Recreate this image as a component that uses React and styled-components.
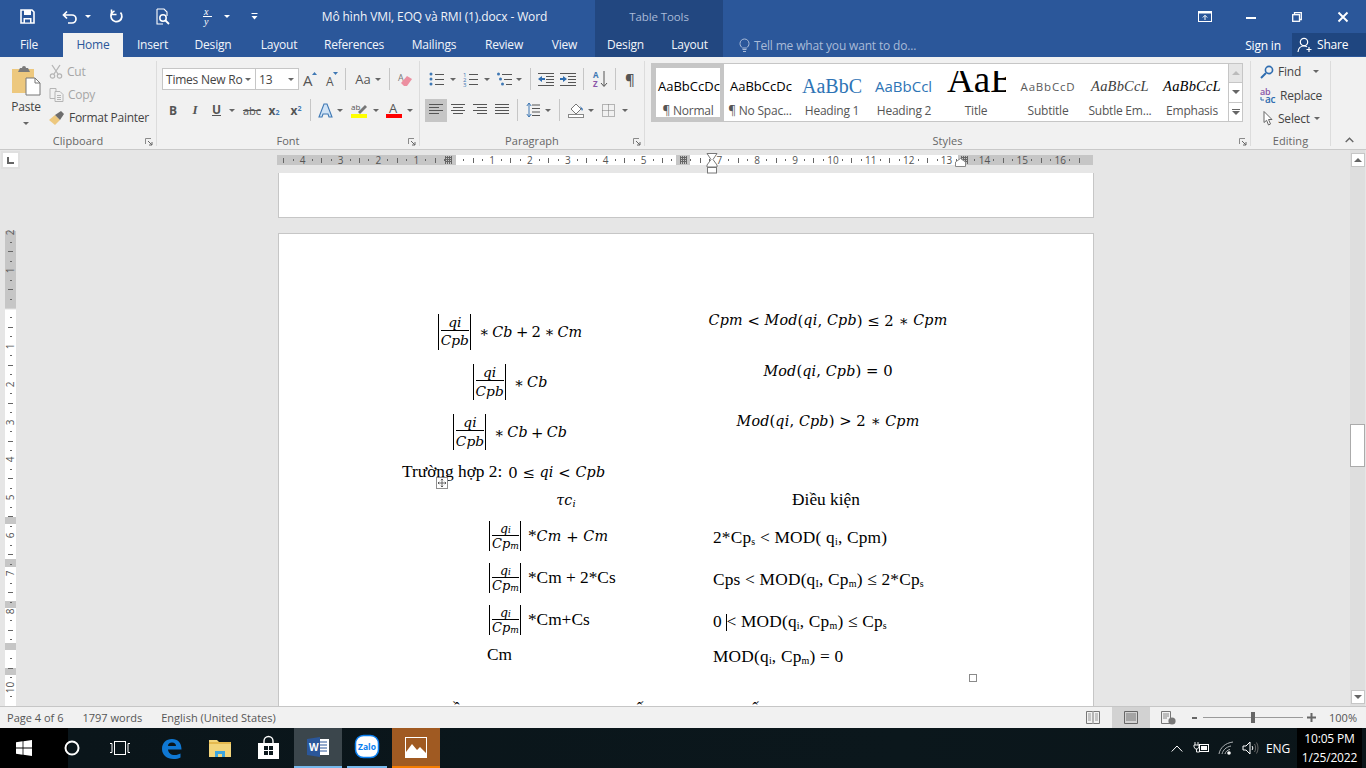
import React from "react";
import styled, { createGlobalStyle } from "styled-components";

const UI = `"Open Sans", "Noto Sans", sans-serif`;
const DOC = `"Liberation Serif", "Times New Roman", serif`;
const MATH = `"DejaVu Serif", "Liberation Serif", serif`;

const GlobalStyle = createGlobalStyle`
  html, body { margin: 0; padding: 0; overflow: hidden; }
  body { font-family: ${UI}; background: #e6e6e6; }
  * { box-sizing: border-box; }
`;

const Shell = styled.div`
  width: 1366px;
  height: 768px;
  display: flex;
  flex-direction: column;
  overflow: hidden;
`;

/* ---------- title bar ---------- */
const TitleBar = styled.div`
  height: 33px;
  background: #2b579a;
  display: flex;
  align-items: center;
  color: #fff;
`;
const Quick = styled.div`
  width: ${(p) => p.$w}px;
  flex: none;
  display: flex;
  align-items: center;
  justify-content: center;
  gap: ${(p) => p.$gap || 5}px;
`;
const DocTitle = styled.div`
  width: 287px;
  margin: 0 17px 0 23px;
  text-align: center;
  font-size: 12px;
  letter-spacing: -0.12px;
  white-space: nowrap;
  color: #f1f4f9;
`;
const ToolsBand = styled.div`
  width: 128px;
  height: 33px;
  background: #224780;
  color: #a9bbd8;
  font-size: 11.5px;
  letter-spacing: -0.1px;
  display: flex;
  align-items: center;
  justify-content: center;
`;
const WindowButtons = styled.div`
  margin-left: auto;
  display: flex;
  align-items: center;
`;
const WinBtn = styled.div`
  width: 46px;
  display: flex;
  justify-content: center;
`;

/* ---------- tabs ---------- */
const TabRow = styled.div`
  height: 24px;
  background: #2b579a;
  display: flex;
  align-items: stretch;
`;
const Tab = styled.div`
  width: ${(p) => p.$w}px;
  flex: none;
  display: flex;
  align-items: center;
  justify-content: center;
  font-size: 12px;
  letter-spacing: -0.2px;
  padding-bottom: 1px;
  color: ${(p) => (p.$active ? "#2b579a" : "#f2f5fa")};
  background: ${(p) => (p.$active ? "#f1f1f1" : p.$context ? "#224780" : "transparent")};
`;
const TellMe = styled.div`
  display: flex;
  align-items: center;
  gap: 4px;
  margin-left: 16px;
  color: #a9bbd8;
  font-size: 12px;
  letter-spacing: -0.17px;
`;
const SignIn = styled.div`
  margin-left: auto;
  width: 72px;
  display: flex;
  align-items: center;
  justify-content: center;
  color: #fff;
  font-size: 12px;
  letter-spacing: -0.2px;
  padding-left: 14px;
`;
const Share = styled.div`
  width: 74px;
  height: 23px;
  background: #1f4680;
  color: #fff;
  font-size: 12px;
  letter-spacing: -0.2px;
  display: flex;
  align-items: center;
  gap: 4px;
  padding-left: 5px;
`;

/* ---------- ribbon ---------- */
const Ribbon = styled.div`
  height: 93px;
  background: #f1f1f1;
  border-bottom: 1px solid #c9c9c9;
  display: flex;
`;
const Group = styled.div`
  width: ${(p) => p.$w}px;
  flex: none;
  position: relative;
  display: flex;
  flex-direction: column;
  margin: 4px 0 3px;
  border-right: 1px solid #dcdcdc;
`;
const GroupBody = styled.div`
  flex: 1;
  min-height: 0;
  display: flex;
  flex-direction: ${(p) => (p.$row ? "row" : "column")};
`;
const GroupLabel = styled.div`
  height: 10px;
  line-height: 10px;
  flex: none;
  text-align: center;
  font-size: 11px;
  letter-spacing: 0.05px;
  color: #666;
`;
const Launcher = styled.svg`
  position: absolute;
  right: 3px;
  bottom: 0;
`;
const PasteCol = styled.div`
  width: 46px;
  display: flex;
  flex-direction: column;
  align-items: center;
  padding: 4px 0 0 6px;
  color: #444;
  font-size: 12px;
  letter-spacing: -0.2px;
  gap: 3px;
`;
const PasteCaret = styled.div`
  margin-top: 3px;
  line-height: 0;
`;
const ClipCol = styled.div`
  display: flex;
  flex-direction: column;
  margin: -1px 0 0 3px;
`;
const ClipItem = styled.div`
  height: 23px;
  display: flex;
  align-items: center;
  gap: 4px;
  font-size: 12px;
  letter-spacing: -0.27px;
  white-space: nowrap;
  color: ${(p) => (p.$off ? "#a6a6a6" : "#444")};
`;
const ToolRow = styled.div`
  display: flex;
  align-items: center;
  height: 24px;
  flex: none;
  margin-top: ${(p) => p.$mt || 0}px;
  margin-left: ${(p) => p.$ml || 0}px;
`;
const Tool = styled.div`
  width: ${(p) => p.$w || 22}px;
  height: 23px;
  flex: none;
  display: flex;
  align-items: center;
  justify-content: center;
  gap: ${(p) => p.$gap || 4}px;
  background: ${(p) => (p.$on ? "#c6c6c6" : "transparent")};
  color: #555;
  font-family: ${(p) => p.$font || "inherit"};
  font-size: ${(p) => p.$fs || 12}px;
  font-weight: ${(p) => p.$fw || 400};
  font-style: ${(p) => (p.$italic ? "italic" : "normal")};
  text-decoration: ${(p) => (p.$strike ? "line-through" : "none")};
`;
const ScriptNum = styled.span`
  font-size: 7px;
  color: #3f78b4;
  align-self: ${(p) => (p.$up ? "flex-start" : "flex-end")};
  margin: ${(p) => (p.$up ? "5px 0 0 -3px" : "0 0 5px -3px")};
`;
const Sep = styled.div`
  width: 1px;
  height: 22px;
  flex: none;
  background: #c6c6c6;
  margin: 0 ${(p) => p.$m ?? 6}px;
`;
const Caret = styled.span`
  display: inline-block;
  width: 0;
  height: 0;
  flex: none;
  border: 3px solid transparent;
  border-top: 3px solid ${(p) => (p.$light ? "#fff" : "#666")};
  border-bottom: 0;
  margin-left: ${(p) => p.$ml || 0}px;
`;
const Combo = styled.div`
  width: ${(p) => p.$w}px;
  height: 22px;
  flex: none;
  background: #fff;
  border: 1px solid #c6c6c6;
  margin-left: ${(p) => (p.$join ? "-1px" : "0")};
  display: flex;
  align-items: center;
  justify-content: space-between;
  padding: 0 4px 0 3px;
  font-size: 12px;
  letter-spacing: -0.22px;
  color: #444;
  white-space: nowrap;
`;
const Gallery = styled.div`
  width: 592px;
  height: 59px;
  margin: 2px 0 0 6px;
  background: #fff;
  border: 1px solid #c6c6c6;
  display: flex;
`;
const StyleCard = styled.div`
  width: 72px;
  flex: none;
  height: 57px;
  display: flex;
  flex-direction: column;
  align-items: center;
  border: 4px solid ${(p) => (p.$on ? "#c6c6c6" : "transparent")};
`;
const Sample = styled.div`
  height: 30px;
  width: ${(p) => p.$width || 64}px;
  flex: none;
  margin-top: 3px;
  overflow: hidden;
  display: flex;
  align-items: center;
  justify-content: ${(p) => (p.$left !== undefined ? "flex-start" : "center")};
  white-space: nowrap;
  font-family: ${(p) => p.$font || UI};
  font-size: ${(p) => p.$size || 13}px;
  font-style: ${(p) => (p.$italic ? "italic" : "normal")};
  color: ${(p) => p.$color || "#000"};
  letter-spacing: ${(p) => p.$ls || 0}px;
  padding-left: ${(p) => p.$left || 0}px;
  padding-bottom: ${(p) => p.$raise || 0}px;
`;
const StyleName = styled.div`
  margin-top: 1px;
  font-size: 12px;
  letter-spacing: -0.22px;
  color: #555;
  white-space: nowrap;
`;
const GalleryScroll = styled.div`
  margin-left: auto;
  width: 15px;
  display: flex;
  flex-direction: column;
`;
const GalleryBtn = styled.div`
  flex: 1;
  display: flex;
  flex-direction: column;
  gap: 1px;
  align-items: center;
  justify-content: center;
  background: ${(p) => (p.$off ? "#e6e6e6" : "#fff")};
  border-left: 1px solid #c6c6c6;
  border-top: ${(p) => (p.$first ? "none" : "1px solid #c6c6c6")};
`;
const EditCol = styled.div`
  display: flex;
  flex-direction: column;
  padding: 0 0 0 9px;
  margin-top: -1px;
`;
const EditItem = styled.div`
  height: 23.5px;
  display: flex;
  align-items: center;
  gap: 4px;
  padding-left: ${(p) => p.$indent || 0}px;
  font-size: 12px;
  letter-spacing: -0.22px;
  color: #444;
`;
const Collapse = styled.div`
  flex: 1;
  display: flex;
  align-items: flex-end;
  justify-content: center;
  padding-bottom: 6px;
  padding-left: 2px;
`;
const UnderBar = styled.span`
  display: inline-block;
  border-bottom: 1.5px solid #555;
  line-height: 11px;
  font-weight: 700;
`;

/* ---------- workspace ---------- */
const Workspace = styled.div`
  flex: 1;
  min-height: 0;
  background: #e6e6e6;
  display: grid;
  grid-template-columns: 278px 816px 256px 16px;
  grid-template-rows: 23px 1fr;
`;
const Corner = styled.div`
  padding: 3px 0 0 3px;
`;
const CornerBtn = styled.div`
  width: 15px;
  height: 14px;
  background: #fff;
  outline: 2px solid #e0e0e0;
  display: flex;
  align-items: center;
  justify-content: center;
`;
const HRuler = styled.div`
  height: 10px;
  margin: 5px 0 0 -1px;
  width: 816px;
  display: flex;
  padding-left: 2px;
  position: relative;
  background: linear-gradient(
    to right,
    #c6c6c6 179px,
    #fff 179px,
    #fff 399px,
    #c6c6c6 399px,
    #c6c6c6 413px,
    #fff 413px,
    #fff 681px,
    #c6c6c6 681px
  );
`;
const HCell = styled.div`
  flex: 0 0 9.475px;
  width: 9.475px;
  min-width: 0;
  display: flex;
  align-items: center;
  justify-content: center;
  font-size: 10px;
  line-height: 10px;
  color: #555;
  white-space: nowrap;
`;
const HTick = styled.span`
  width: 1px;
  flex: none;
  height: ${(p) => (p.$long ? 5 : 2)}px;
  background: #666;
`;
const RulerGrid = styled.svg`
  position: absolute;
  top: 1px;
  left: ${(p) => p.$x}px;
`;
const Marker = styled.svg`
  position: absolute;
  left: ${(p) => p.$x}px;
  top: ${(p) => p.$y}px;
`;
const VRulerCol = styled.div`
  padding: 55px 0 0 5px;
  grid-row: 2;
  overflow: hidden;
`;
const VRuler = styled.div`
  width: 11px;
  height: 478px;
  display: flex;
  flex-direction: column;
  overflow: hidden;
  background: linear-gradient(
    to bottom,
    transparent 3px,
    #c6c6c6 3px,
    #c6c6c6 80px,
    #fff 82px,
    #fff 289px,
    #c6c6c6 289px,
    #c6c6c6 296px,
    #fff 296px,
    #fff 331px,
    #c6c6c6 331px,
    #c6c6c6 339px,
    #fff 339px,
    #fff 373px,
    #c6c6c6 373px,
    #c6c6c6 380px,
    #fff 380px,
    #fff 415px,
    #c6c6c6 415px,
    #c6c6c6 422px,
    #fff 422px,
    #fff 440px,
    #c6c6c6 440px,
    #c6c6c6 447px,
    #fff 447px
  );
`;
const VCell = styled.div`
  flex: 0 0 9.475px;
  height: 9.475px;
  min-height: 0;
  display: flex;
  align-items: center;
  justify-content: center;
  font-size: 10px;
  line-height: 9px;
  color: #555;
  white-space: nowrap;
`;
const VNum = styled.span`
  transform: rotate(-90deg);
`;
const VTick = styled.span`
  height: 1px;
  flex: none;
  width: ${(p) => (p.$long ? 5 : 2)}px;
  background: #666;
`;
const Pages = styled.div`
  grid-row: 2;
  grid-column: 2;
  display: flex;
  flex-direction: column;
  gap: 15px;
  overflow: hidden;
  min-height: 0;
`;
const PageTail = styled.div`
  height: 45px;
  flex: none;
  background: #fff;
  border: 1px solid #c6c6c6;
  border-top: none;
`;
const Page = styled.div`
  flex: 1;
  min-height: 0;
  position: relative;
  background: #fff;
  border: 1px solid #c6c6c6;
  border-bottom: none;
  padding: 72px 0 0 123px;
  font-family: ${DOC};
  font-size: 17.33px;
  color: #000;
  overflow: hidden;
`;
const CaseGrid = styled.div`
  display: grid;
  grid-template-columns: 216px 420px;
  grid-auto-rows: 50.4px;
  align-items: center;
  justify-items: center;
`;
const CondCell = styled.div`
  padding-bottom: 22px;
  white-space: nowrap;
`;
const MathLine = styled.div`
  display: flex;
  align-items: center;
  white-space: nowrap;
  font-family: ${MATH};
  font-size: 14.8px;
`;
const CostExpr = styled(MathLine)`
  word-spacing: -1.5px;
  padding-top: 1px;
`;
const PlainPart = styled.span`
  font-family: ${DOC};
  font-size: 17.33px;
`;
const Mi = styled.i`
  font-family: ${MATH};
  font-size: ${(p) => p.$fs || 14.3}px;
  letter-spacing: 0.2px;
`;
const Abs = styled.div`
  display: flex;
  align-items: center;
  padding: 0 1px 0 2px;
  margin: 0 ${(p) => p.$mr || 4}px 0 ${(p) => p.$ml || 0}px;
  border-left: 1px solid #000;
  border-right: 1px solid #000;
  height: ${(p) => p.$h}px;
`;
const Frac = styled.div`
  display: flex;
  flex-direction: column;
  align-items: center;
`;
const Num = styled.div`
  height: ${(p) => p.$h}px;
  display: flex;
  align-items: center;
  justify-content: center;
  align-self: stretch;
  font-family: ${MATH};
  font-style: italic;
  font-size: ${(p) => p.$fs}px;
  border-bottom: 1px solid #000;
`;
const Den = styled.div`
  height: ${(p) => p.$h}px;
  display: flex;
  align-items: center;
  font-family: ${MATH};
  font-style: italic;
  font-size: ${(p) => p.$fs}px;
`;
const Sub = styled.sub`
  font-size: 0.7em;
  line-height: 0;
  align-self: center;
  margin-top: 4px;
`;
const CaseLine = styled.div`
  height: 20px;
  margin-top: 5px;
  display: flex;
  align-items: center;
  gap: 6px;
  white-space: nowrap;
`;
const CostTable = styled.div`
  margin: 6px 0 0 85px;
  display: grid;
  grid-template-columns: 226px 400px;
  grid-template-rows: 27px 42px 42px 42px 28px;
  align-items: center;
  position: relative;
  white-space: nowrap;
`;
const HeadLeft = styled.div`
  width: 158px;
  text-align: center;
`;
const HeadRight = styled.div`
  width: 226px;
  text-align: center;
`;
const TableRowHead = styled.div`
  grid-column: 1 / 3;
  display: grid;
  grid-template-columns: 226px 400px;
  align-items: center;
  height: 27px;
  padding-bottom: 3px;
`;
const Condition = styled.div`
  letter-spacing: 0.2px;
  padding-top: 3px;
`;
const TextCaret = styled.span`
  display: inline-block;
  width: 1px;
  height: 17px;
  background: #000;
  margin-right: -1px;
  vertical-align: -4px;
`;
const SmallSub = styled.sub`
  font-size: 10px;
  line-height: 0;
  vertical-align: -2px;
`;
const Accents = styled.div`
  position: absolute;
  left: 0;
  bottom: -13px;
  display: flex;
  font-size: 17px;
`;
const AccentMark = styled.span`
  margin-left: ${(p) => p.$ml}px;
`;
const MoveHandle = styled.div`
  position: absolute;
  left: 157px;
  top: 243px;
  width: 12px;
  height: 12px;
  background: #fff;
  border: 1px solid #8f8f8f;
  display: flex;
  align-items: center;
  justify-content: center;
`;
const SizeHandle = styled.div`
  position: absolute;
  left: 690px;
  top: 440px;
  width: 8px;
  height: 8px;
  border: 1px solid #8a8a8a;
  background: #fff;
`;
const ScrollBar = styled.div`
  grid-row: 1 / 3;
  grid-column: 4;
  background: #dedede;
  margin-right: 1px;
  display: flex;
  flex-direction: column;
  align-items: center;
  padding: 3px 0 2px;
`;
const ScrollBtn = styled.div`
  width: 14px;
  height: 14px;
  flex: none;
  background: #fff;
  border: 1px solid #c6c6c6;
  display: flex;
  align-items: center;
  justify-content: center;
  margin-top: ${(p) => (p.$end ? "auto" : 0)};
`;
const Thumb = styled.div`
  width: 15px;
  height: 43px;
  flex: none;
  margin-top: 257px;
  background: #fff;
  border: 1px solid #ababab;
`;

/* ---------- status bar ---------- */
const StatusBar = styled.div`
  height: 22px;
  flex: none;
  background: #f1f1f1;
  border-top: 1px solid #c6c6c6;
  display: flex;
  align-items: center;
  font-size: 11px;
  letter-spacing: 0.01px;
  color: #555;
`;
const StatusItem = styled.div`
  margin-left: ${(p) => p.$ml}px;
  margin-right: ${(p) => p.$mr || 0}px;
  white-space: nowrap;
`;
const StatusSpacer = styled.div`
  flex: 1;
`;
const ViewBtn = styled.div`
  width: ${(p) => p.$w}px;
  height: 21px;
  flex: none;
  margin-right: ${(p) => p.$mr || 0}px;
  display: flex;
  align-items: center;
  justify-content: center;
  background: ${(p) => (p.$on ? "#d2d2d2" : "transparent")};
`;
const ZoomTrack = styled.div`
  width: 100px;
  height: 1px;
  flex: none;
  margin: 0 4px;
  background: #9a9a9a;
  display: flex;
  justify-content: center;
  align-items: center;
`;
const ZoomThumb = styled.div`
  width: 4px;
  height: 11px;
  background: #666;
  flex: none;
`;
const ZoomSign = styled.div`
  width: 9px;
  flex: none;
  display: flex;
  justify-content: center;
`;

/* ---------- taskbar ---------- */
const Taskbar = styled.div`
  height: 40px;
  flex: none;
  background: linear-gradient(to right, #000 68px, #0a151a 68px, #0b171c 900px, #0b1519);
  display: flex;
  align-items: stretch;
  color: #fff;
`;
const TaskSlot = styled.div`
  width: ${(p) => p.$w || 48}px;
  flex: none;
  margin-left: ${(p) => p.$ml || 0}px;
  display: flex;
  align-items: center;
  justify-content: center;
  background: ${(p) => p.$bg || "transparent"};
  border-bottom: ${(p) => (p.$bar ? `2px solid ${p.$bar}` : "none")};
`;
const Tray = styled.div`
  margin-left: auto;
  display: flex;
  align-items: center;
`;
const TrayIcon = styled.div`
  width: ${(p) => p.$w}px;
  flex: none;
  display: flex;
  justify-content: center;
`;
const TrayText = styled.div`
  font-size: 12px;
  width: 38px;
  text-align: center;
  letter-spacing: -0.1px;
`;
const Clock = styled.div`
  width: 65px;
  height: 40px;
  background: #000;
  margin-right: 4px;
  display: flex;
  flex-direction: column;
  align-items: center;
  justify-content: center;
  font-size: 12px;
  line-height: 19px;
  letter-spacing: -0.15px;
  white-space: nowrap;
`;

/* ---------- drawings ---------- */
const IcSvg = styled.svg`
  flex: none;
  display: block;
  overflow: visible;
`;
const Ic = ({ w = 16, h = 16, children }) => (
  <IcSvg width={w} height={h} viewBox={`0 0 ${w} ${h}`} fill="none">
    {children}
  </IcSvg>
);

const Lines = ({ rows, color = "#555" }) => (
  <Ic w={16} h={14}>
    {rows.map(([x1, x2], i) => (
      <rect key={i} x={x1} y={1 + i * 3} width={x2 - x1} height="1" fill={color} />
    ))}
  </Ic>
);

const SaveIcon = () => (
  <Ic w={15} h={15}>
    <path d="M1 1h11l2 2v11H1z" stroke="#fff" strokeWidth="1.6" />
    <rect x="4" y="1" width="7" height="5" fill="#fff" />
    <rect x="3.5" y="9" width="8" height="5" fill="#fff" />
    <rect x="5" y="10.5" width="5" height="3" fill="#2b579a" />
  </Ic>
);
const UndoIcon = () => (
  <Ic w={16} h={14}>
    <path d="M5 1.5 1.5 5 5 8.5M2 5h8a4 4 0 0 1 0 8H6" stroke="#fff" strokeWidth="1.7" />
  </Ic>
);
const RedoIcon = () => (
  <Ic w={15} h={15}>
    <path d="M11.5 3.5a5.5 5.5 0 1 1-6-1.5" stroke="#fff" strokeWidth="1.8" />
    <path d="M2.5 0.5v5h5" stroke="#fff" strokeWidth="1.6" />
  </Ic>
);
const PreviewIcon = () => (
  <Ic w={16} h={17}>
    <path d="M2 1h7l3 3v4M2 1v15h6" stroke="#fff" strokeWidth="1.1" />
    <circle cx="8" cy="10" r="3.2" stroke="#fff" strokeWidth="1.5" />
    <path d="M10.5 12.5 14 16" stroke="#fff" strokeWidth="1.8" />
  </Ic>
);
const EquationIcon = () => (
  <Ic w={9} h={19}>
    <text x="1" y="8" fontFamily={DOC} fontStyle="italic" fontSize="10" fill="#fff">x</text>
    <rect x="0" y="9" width="9" height="1" fill="#fff" />
    <text x="1" y="18" fontFamily={DOC} fontStyle="italic" fontSize="10" fill="#fff">y</text>
  </Ic>
);
const CustomizeIcon = () => (
  <Ic w={7} h={7}>
    <rect x="0.5" y="0" width="6" height="1" fill="#fff" />
    <path d="M0.5 3h6L3.5 6.5z" fill="#fff" />
  </Ic>
);
const RibbonOptions = () => (
  <Ic w={14} h={11}>
    <rect x="0.5" y="0.5" width="13" height="10" stroke="#fff" />
    <rect x="0.5" y="0.5" width="13" height="2" fill="#fff" />
    <path d="M7 9V4.5M4.8 6.5 7 4.3l2.2 2.2" stroke="#fff" />
  </Ic>
);
const MinIcon = () => (
  <Ic w={10} h={10}>
    <rect x="0" y="5" width="10" height="2" fill="#fff" />
  </Ic>
);
const RestoreIcon = () => (
  <Ic w={10} h={10}>
    <path d="M2.5 2.5V.7h6.8v6.8H7.5" stroke="#fff" strokeWidth="1.3" />
    <rect x=".7" y="2.7" width="6.8" height="6.6" stroke="#fff" strokeWidth="1.3" />
  </Ic>
);
const CloseIcon = () => (
  <Ic w={10} h={10}>
    <path d="M.5.5l9 9M9.5.5l-9 9" stroke="#fff" strokeWidth="1.9" />
  </Ic>
);
const BulbIcon = () => (
  <Ic w={11} h={15}>
    <path d="M3.5 10C2 8.7 1 7.6 1 5.5a4.500 4.500 0 0 1 9 0C10 7.6 9 8.7 7.5 10z" stroke="#a9bbd8" />
    <path d="M3.5 11.5h4M4 13.5h3" stroke="#a9bbd8" />
  </Ic>
);
const ShareIcon = () => (
  <Ic w={16} h={16}>
    <circle cx="7" cy="5" r="3.7" stroke="#fff" strokeWidth="1.2" />
    <path d="M1 15c.3-3.4 2.5-6 6-6 1.2 0 2.2.3 3 .8" stroke="#fff" strokeWidth="1.2" />
    <path d="M12 10v5M9.5 12.5h5" stroke="#fff" strokeWidth="1.2" />
  </Ic>
);
const PasteIcon = () => (
  <Ic w={30} h={30}>
    <rect x="1" y="4" width="22" height="24" fill="#edc87e" />
    <path d="M9 3h2a2 2 0 0 1 4 0h2l2 4H7z" fill="#7a7a7a" />
    <path d="M15 13h9l5 5v12H15z" fill="#fff" stroke="#777" />
    <path d="M24 13v5h5" stroke="#777" />
  </Ic>
);
const CutIcon = () => (
  <Ic w={14} h={15}>
    <path d="M3 1l6 9M11 1L5 10" stroke="#b5b5b5" strokeWidth="1.3" />
    <circle cx="3.5" cy="12" r="2.2" stroke="#b5b5b5" strokeWidth="1.2" />
    <circle cx="10.5" cy="12" r="2.2" stroke="#b5b5b5" strokeWidth="1.2" />
  </Ic>
);
const CopyIcon = () => (
  <Ic w={15} h={14}>
    <path d="M1 .5h6v10H1z" stroke="#b5b5b5" />
    <path d="M6 3.5h5l3 3v7H6z" fill="#f1f1f1" stroke="#b5b5b5" />
    <path d="M8 7.5h4M8 9.5h4M8 11.5h4" stroke="#b5b5b5" />
  </Ic>
);
const PainterIcon = () => (
  <Ic w={16} h={15}>
    <path d="M0 10l6-5 5 5-5 5z" fill="#edc87e" />
    <path d="M6 5l6-4 3 3-4 6z" fill="#6d6d6d" />
  </Ic>
);
const Launch = () => (
  <Launcher width="8" height="8" viewBox="0 0 8 8" fill="none">
    <path d="M.5 6V.5H6" stroke="#8a8a8a" />
    <path d="M3 3l4 4M7 4v3H4" stroke="#666" />
  </Launcher>
);
const BigA = ({ up }) => (
  <Ic w={up ? 14 : 12} h={15}>
    <text x="0" y="14" fontFamily={UI} fontSize={up ? 15 : 12} fill="#555">A</text>
    <path d={up ? "M9 3l2.5-3L14 3z" : "M7 0h5L9.5 3z"} fill="#3f78b4" />
  </Ic>
);
const Eraser = () => (
  <Ic w={15} h={15}>
    <text x="0" y="9" fontFamily={UI} fontSize="9" fill="#777">A</text>
    <path d="M3 11l6-7 5 3-5 7H6z" fill="#ec8fa0" />
  </Ic>
);
const TextEffect = () => (
  <Ic w={15} h={15}>
    <path d="M1 14L6 1h3l5 13h-3l-1-3H5l-1 3z" fill="#cfe2f5" stroke="#3f78b4" strokeWidth="1.1" />
  </Ic>
);
const Highlight = () => (
  <Ic w={16} h={16}>
    <text x="0" y="8" fontFamily={UI} fontSize="8" fill="#555">ab</text>
    <path d="M7 10l7-7 2 2-7 7z" fill="#777" />
    <rect x="0" y="12" width="16" height="4" fill="#ffff00" />
  </Ic>
);
const FontColor = () => (
  <Ic w={16} h={16}>
    <text x="3" y="11" fontFamily={UI} fontSize="13" fill="#555">A</text>
    <rect x="0" y="12" width="16" height="4" fill="#f00" />
  </Ic>
);
const ListIcon = ({ kind }) => (
  <Ic w={15} h={15}>
    {[2, 7, 12].map((y, i) => (
      <g key={y}>
        {kind === "num" ? (
          <text x="0" y={y + 3} fontSize="6" fontFamily={UI} fill="#3f78b4">{i + 1}</text>
        ) : (
          <circle cx={kind === "multi" ? 1.5 + i * 2 : 2} cy={y} r="1.5" fill="#3f78b4" />
        )}
        <rect x={kind === "multi" ? 5 + i * 2 : 6} y={y} width={kind === "multi" ? 10 - i * 2 : 9} height="1" fill="#555" />
      </g>
    ))}
  </Ic>
);
const IndentIcon = ({ dir }) => (
  <Ic w={16} h={13}>
    {[0, 3, 6, 9, 12].map((y) => (
      <rect key={y} x={y === 0 || y === 12 ? 0 : 8} y={y} width={y === 0 || y === 12 ? 16 : 8} height="1" fill="#555" />
    ))}
    <path d={dir === "out" ? "M0 6l4-3v2h3v2H4v2z" : "M7 6L3 3v2H0v2h3v2z"} fill="#2f6db0" />
  </Ic>
);
const SortIcon = () => (
  <Ic w={15} h={17}>
    <text x="0" y="7" fontSize="8" fontFamily={UI} fontWeight="700" fill="#3f78b4">A</text>
    <text x="0" y="16" fontSize="8" fontFamily={UI} fontWeight="700" fill="#8a55a8">Z</text>
    <path d="M11 0v15M8 12l3 3.5 3-3.5" stroke="#555" />
  </Ic>
);
const LineSpacing = () => (
  <Ic w={14} h={16}>
    <path d="M3 1v14M.8 4 3 1l2.2 3M.8 12 3 15l2.2-3" stroke="#3f78b4" />
    <path d="M6 3h8M6 6.5h8M6 10h8M6 13.5h8" stroke="#555" />
  </Ic>
);
const Shading = () => (
  <Ic w={16} h={16}>
    <path d="M3 7l5-5 5 5-5 5z" stroke="#777" fill="#fff" />
    <path d="M12 4l3 3-1 2z" fill="#2f6db0" />
    <rect x=".5" y="12.5" width="15" height="3" stroke="#888" fill="#fff" />
  </Ic>
);
const Borders = () => (
  <Ic w={13} h={13}>
    <path d="M.5.5h12v12H.5zM6.5.5v12M.5 6.5h12" stroke="#777" strokeDasharray="1 1" />
  </Ic>
);
const FindIcon = () => (
  <Ic w={14} h={14}>
    <circle cx="9" cy="5" r="3.6" stroke="#2f6db0" strokeWidth="1.6" />
    <path d="M6 8l-5 5" stroke="#2f6db0" strokeWidth="2" />
  </Ic>
);
const ReplaceIcon = () => (
  <Ic w={16} h={15}>
    <text x="0" y="7" fontSize="9" fontFamily={UI} fontWeight="600" fill="#8a55a8">ab</text>
    <text x="5" y="15" fontSize="10" fontFamily={UI} fontWeight="600" fill="#2f6db0">ac</text>
    <path d="M1 9v3h3" stroke="#2f6db0" />
  </Ic>
);
const SelectIcon = () => (
  <Ic w={11} h={15}>
    <path d="M1 .5v11l2.6-2.2L5.500 14l2-1-2-4.500H9z" stroke="#666" fill="#fff" />
  </Ic>
);
const ChevronUp = () => (
  <Ic w={9} h={6}>
    <path d="M.7 5 4.500 1.200 8.300 5" stroke="#666" strokeWidth="1.4" />
  </Ic>
);
const Tri = ({ up, c = "#666" }) => (
  <Ic w={8} h={4}>
    <path d={up ? "M0 4l4-4 4 4z" : "M0 0l4 4 4-4z"} fill={c} />
  </Ic>
);
const MoreTri = () => (
  <>
    <Ic w={8} h={1}><rect width="8" height="1" fill="#666" /></Ic>
    <Tri />
  </>
);
const ReadIcon = () => (
  <Ic w={14} h={13}>
    <path d="M.5.5h6l.5 1 .5-1h6v12h-6L7 11.500l-.5 1h-6zM7 2v9" stroke="#777" />
    <path d="M2 3h3M2 5h3M2 7h3M2 9h3M9 3h3M9 5h3M9 7h3M9 9h3" stroke="#999" />
  </Ic>
);
const PrintIcon = () => (
  <Ic w={14} h={13}>
    <path d="M.5.5h13v12H.5z" stroke="#666" />
    <path d="M2 3h10M2 5h10M2 7h10M2 9h10" stroke="#777" />
  </Ic>
);
const WebIcon = () => (
  <Ic w={15} h={14}>
    <path d="M.5.5h9v12h-9z" stroke="#777" />
    <path d="M2 3h6M2 5h6M2 7h4" stroke="#888" />
    <circle cx="11" cy="10" r="3.6" fill="#777" />
  </Ic>
);
const GridMark = ({ x }) => (
  <RulerGrid $x={x} width="7" height="8" viewBox="0 0 7 8" fill="none">
    <path d="M.5 0v8M2.500 0v8M4.500 0v8M6.500 0v8M0 1.500h7M0 3.500h7M0 5.500h7" stroke="#666" />
  </RulerGrid>
);
const WinLogo = () => (
  <Ic w={16} h={16}>
    <path d="M0 2.200 6.600 1.300v6.200H0zM7.400 1.200 16 0v7.500H7.400zM0 8.400h6.600v6.300L0 13.800zM7.400 8.400H16V16l-8.600-1.200z" fill="#fff" />
  </Ic>
);
const CortanaIcon = () => (
  <Ic w={16} h={16}>
    <circle cx="8" cy="8" r="6.500" stroke="#fff" strokeWidth="2" />
  </Ic>
);
const TaskViewIcon = () => (
  <Ic w={20} h={14}>
    <rect x="4.500" y=".5" width="11" height="13" stroke="#fff" />
    <path d="M0 2.500h2v9H0M20 2.500h-2v9h2" stroke="#fff" />
  </Ic>
);
const EdgeIcon = () => (
  <Ic w={21} h={21}>
    <path d="M1 11C1 5 5 1 11 1c6 0 9.500 4 9.500 10.500H7c.3 3.500 3 5.500 6.500 5.500 2.500 0 4.500-.6 6-1.500v4c-2 1-4.300 1.500-7 1.500C6 21 1 17 1 11zm6-3h8c0-2-1.500-3.500-4-3.500S7 6 7 8z" fill="#0f78d4" />
  </Ic>
);
const FolderIcon = () => (
  <Ic w={22} h={19}>
    <path d="M0 1h8l2 2h12v15H0z" fill="#f3d57b" />
    <rect x="0" y="3" width="22" height="2" fill="#e5b94e" />
    <path d="M6 12h10v6H13v-3H9v3H6z" fill="#3ea6e0" />
  </Ic>
);
const StoreIcon = () => (
  <Ic w={21} h={22}>
    <path d="M0 6h21v16H0z" fill="#fff" />
    <path d="M6 6V4a4 4 0 0 1 9 0v2" stroke="#fff" strokeWidth="1.4" />
    <path d="M6 9h4v4H6zM11 9h4v4h-4zM6 14h4v4H6zM11 14h4v4h-4z" fill="#0b171c" />
  </Ic>
);
const WordIcon = () => (
  <Ic w={22} h={20}>
    <path d="M9 2h13v16H9z" fill="#fff" />
    <path d="M11 5h9M11 8h9M11 11h9M11 14h9" stroke="#2b579a" />
    <path d="M0 2l13-2v20L0 18z" fill="#2b579a" />
    <text x="2" y="14" fontSize="10" fontWeight="700" fontFamily={UI} fill="#fff">W</text>
  </Ic>
);
const ZaloIcon = () => (
  <Ic w={24} h={24}>
    <rect x="0.500" y="0.500" width="23" height="22" rx="8" fill="#fff" stroke="#0a7ff0" strokeWidth="1.5" />
    <text x="12" y="15" textAnchor="middle" fontSize="8.500" fontWeight="700" fontFamily={UI} fill="#0a7ff0">Zalo</text>
  </Ic>
);
const PhotosIcon = () => (
  <Ic w={22} h={21}>
    <rect x=".5" y=".5" width="21" height="20" stroke="#fff" />
    <path d="M1 20V15l6-8 5 6 3-3 6 6v4z" fill="#fff" />
  </Ic>
);
const PlugIcon = () => (
  <Ic w={17} h={12}>
    <path d="M2 0v3M5 0v3M1 3h5v2l-1.500 2H2.500L1 5zM3.500 7v3h3" stroke="#fff" strokeWidth=".9" />
    <rect x="6.500" y="2.500" width="9" height="7" stroke="#fff" />
    <rect x="8" y="4" width="6" height="4" fill="#fff" />
  </Ic>
);
const WifiIcon = () => (
  <Ic w={16} h={14}>
    <path d="M1 13C2 7 7 2 15 1M4 13c1-4 4-7 9-8M7 13c.5-2 2-4 5-4.500" stroke="#aeb2b4" />
    <circle cx="11" cy="12" r="1.800" fill="#fff" />
  </Ic>
);
const VolumeIcon = () => (
  <Ic w={17} h={14}>
    <path d="M1 5h3l4-4v12L4 9H1z" stroke="#fff" />
    <path d="M10 5c1 1 1 3 0 4" stroke="#fff" />
    <path d="M12.500 3c1.500 2 1.500 6 0 8M14.500 1.500c2 3 2 8 0 11" stroke="#666" />
  </Ic>
);
const TrayChevron = () => (
  <Ic w={12} h={7}>
    <path d="M.7 6.500 6 1l5.300 5.500" stroke="#fff" />
  </Ic>
);

const RULER_KS = Array.from({ length: 85 }, (_, i) => i - 18);
const VRULER_KS = Array.from({ length: 51 }, (_, i) => i - 8);

const HMark = ({ k }) => {
  if (k === 0 || k === 24) return null;
  if (k % 4 === 0) return <span>{Math.abs(k / 4)}</span>;
  return <HTick $long={Math.abs(k) % 4 === 2} />;
};
const VMark = ({ k }) => {
  if (k === 0 || k === 36) return null;
  if (k % 4 === 0) return <VNum>{Math.abs(k / 4)}</VNum>;
  return <VTick $long={Math.abs(k) % 4 === 2} />;
};

const BigFrac = ({ top, bottom }) => (
  <Abs $h={36} $mr={8}>
    <Frac>
      <Num $h={17} $fs={13.8}>{top}</Num>
      <Den $h={19} $fs={13.8}>{bottom}</Den>
    </Frac>
  </Abs>
);
const SmallFrac = () => (
  <Abs $h={30} $mr={7} $ml={2}>
    <Frac>
      <Num $h={15} $fs={12.5}>
        q<Sub>i</Sub>
      </Num>
      <Den $h={15} $fs={13}>
        Cp<Sub>m</Sub>
      </Den>
    </Frac>
  </Abs>
);

const STYLES = [
  { name: "¶ Normal", text: "AaBbCcDc", on: true, left: 2 },
  { name: "¶ No Spac...", text: "AaBbCcDc", left: 2 },
  { name: "Heading 1", text: "AaBbC", font: DOC, size: 20, color: "#2e74b5" },
  { name: "Heading 2", text: "AaBbCcl", size: 15, color: "#2e74b5", left: 3 },
  { name: "Title", text: "AaB", font: DOC, size: 37, left: 1, width: 60, raise: 14 },
  { name: "Subtitle", text: "AaBbCcD", color: "#5a5a5a", ls: 0.8, size: 11.5 },
  { name: "Subtle Em...", text: "AaBbCcL", font: DOC, italic: true, size: 14.5, color: "#404040", ls: 0.2 },
  { name: "Emphasis", text: "AaBbCcL", font: DOC, italic: true, size: 14.5, ls: 0.2 },
];

const App = () => (
  <Shell>
    <GlobalStyle />
    <TitleBar>
      <Quick $w={54}><SaveIcon /></Quick>
      <Quick $w={44} $gap={7}><UndoIcon /><Caret $light /></Quick>
      <Quick $w={36}><RedoIcon /></Quick>
      <Quick $w={58}><PreviewIcon /></Quick>
      <Quick $w={48} $gap={12}><EquationIcon /><Caret $light /></Quick>
      <Quick $w={28}><CustomizeIcon /></Quick>
      <DocTitle>Mô hình VMI, EOQ và RMI (1).docx - Word</DocTitle>
      <ToolsBand>Table Tools</ToolsBand>
      <WindowButtons>
        <WinBtn><RibbonOptions /></WinBtn>
        <WinBtn><MinIcon /></WinBtn>
        <WinBtn><RestoreIcon /></WinBtn>
        <WinBtn><CloseIcon /></WinBtn>
      </WindowButtons>
    </TitleBar>

    <TabRow>
      <Tab $w={58}>File</Tab>
      <Tab $w={5} />
      <Tab $w={60} $active>Home</Tab>
      <Tab $w={59}>Insert</Tab>
      <Tab $w={62}>Design</Tab>
      <Tab $w={70}>Layout</Tab>
      <Tab $w={80}>References</Tab>
      <Tab $w={80}>Mailings</Tab>
      <Tab $w={60}>Review</Tab>
      <Tab $w={61}>View</Tab>
      <Tab $w={61} $context>Design</Tab>
      <Tab $w={67} $context>Layout</Tab>
      <TellMe><BulbIcon />Tell me what you want to do...</TellMe>
      <SignIn>Sign in</SignIn>
      <Share><ShareIcon />Share</Share>
    </TabRow>

    <Ribbon>
      <Group $w={157}>
        <GroupBody $row>
          <PasteCol>
            <PasteIcon />
            Paste
            <PasteCaret><Caret /></PasteCaret>
          </PasteCol>
          <ClipCol>
            <ClipItem $off><CutIcon />Cut</ClipItem>
            <ClipItem $off><CopyIcon />Copy</ClipItem>
            <ClipItem><PainterIcon />Format Painter</ClipItem>
          </ClipCol>
        </GroupBody>
        <GroupLabel>Clipboard</GroupLabel>
        <Launch />
      </Group>

      <Group $w={263}>
        <GroupBody>
          <ToolRow $ml={5} $mt={6}>
            <Combo $w={94}>Times New Ro<Caret /></Combo>
            <Combo $w={44} $join>13<Caret /></Combo>
            <Tool $w={22}><BigA up /></Tool>
            <Tool $w={22}><BigA /></Tool>
            <Sep $m={2} />
            <Tool $w={40} $fs={13}>Aa<Caret /></Tool>
            <Sep $m={1} />
            <Tool $w={28}><Eraser /></Tool>
          </ToolRow>
          <ToolRow $ml={5} $mt={7}>
            <Tool $fw={700}>B</Tool>
            <Tool $font={DOC} $fw={700} $fs={13} $italic>I</Tool>
            <Tool $w={35} $gap={8}><UnderBar>U</UnderBar><Caret /></Tool>
            <Tool $w={22} $fs={11} $strike>abc</Tool>
            <Tool $w={22} $fw={700} $gap={3}>x<ScriptNum>2</ScriptNum></Tool>
            <Tool $w={22} $fw={700} $gap={3}>x<ScriptNum $up>2</ScriptNum></Tool>
            <Sep $m={3} />
            <Tool $w={32}><TextEffect /><Caret /></Tool>
            <Tool $w={38} $gap={6}><Highlight /><Caret /></Tool>
            <Tool $w={30} $gap={5}><FontColor /><Caret /></Tool>
          </ToolRow>
        </GroupBody>
        <GroupLabel>Font</GroupLabel>
        <Launch />
      </Group>

      <Group $w={225}>
        <GroupBody>
          <ToolRow $ml={5} $mt={6}>
            <Tool $w={34} $gap={6}><ListIcon /><Caret /></Tool>
            <Tool $w={34} $gap={6}><ListIcon kind="num" /><Caret /></Tool>
            <Tool $w={33}><ListIcon kind="multi" /><Caret /></Tool>
            <Sep $m={4} />
            <Tool><IndentIcon dir="out" /></Tool>
            <Tool><IndentIcon dir="in" /></Tool>
            <Sep $m={4} />
            <Tool $w={24}><SortIcon /></Tool>
            <Sep $m={3} />
            <Tool $w={22} $fs={15} $fw={600}>¶</Tool>
          </ToolRow>
          <ToolRow $ml={5} $mt={7}>
            <Tool $on><Lines rows={[[1, 15], [1, 11], [1, 15], [1, 11]]} /></Tool>
            <Tool><Lines rows={[[1, 15], [3, 13], [1, 15], [3, 13]]} /></Tool>
            <Tool><Lines rows={[[1, 15], [5, 15], [1, 15], [5, 15]]} /></Tool>
            <Tool><Lines rows={[[1, 15], [1, 15], [1, 15], [1, 15]]} /></Tool>
            <Sep $m={4} />
            <Tool $w={32} $gap={5}><LineSpacing /><Caret /></Tool>
            <Sep $m={5} />
            <Tool $w={32} $gap={4}><Shading /><Caret /></Tool>
            <Tool $w={36} $gap={7}><Borders /><Caret /></Tool>
          </ToolRow>
        </GroupBody>
        <GroupLabel>Paragraph</GroupLabel>
        <Launch />
      </Group>

      <Group $w={606}>
        <GroupBody>
          <Gallery>
            {STYLES.map((s) => (
              <StyleCard key={s.name} $on={s.on}>
                <Sample
                  $font={s.font}
                  $size={s.size}
                  $italic={s.italic}
                  $color={s.color}
                  $ls={s.ls}
                  $left={s.left}
                  $width={s.width}
                  $raise={s.raise}
                >
                  {s.text}
                </Sample>
                <StyleName>{s.name}</StyleName>
              </StyleCard>
            ))}
            <GalleryScroll>
              <GalleryBtn $first $off><Tri up c="#bbb" /></GalleryBtn>
              <GalleryBtn><Tri /></GalleryBtn>
              <GalleryBtn><MoreTri /></GalleryBtn>
            </GalleryScroll>
          </Gallery>
        </GroupBody>
        <GroupLabel>Styles</GroupLabel>
        <Launch />
      </Group>

      <Group $w={80}>
        <GroupBody>
          <EditCol>
            <EditItem><FindIcon />Find<Caret $ml={8} /></EditItem>
            <EditItem><ReplaceIcon />Replace</EditItem>
            <EditItem $indent={3}><SelectIcon />Select<Caret /></EditItem>
          </EditCol>
        </GroupBody>
        <GroupLabel>Editing</GroupLabel>
      </Group>
      <Collapse><ChevronUp /></Collapse>
    </Ribbon>

    <Workspace>
      <Corner>
        <CornerBtn>
          <Ic w={7} h={7}><path d="M0 0h2v5h5v2H0z" fill="#666" /></Ic>
        </CornerBtn>
      </Corner>
      <HRuler>
        {RULER_KS.map((k) => (
          <HCell key={k}><HMark k={k} /></HCell>
        ))}
        <GridMark x={168} />
        <GridMark x={403} />
        <GridMark x={684} />
        <Marker $x={429} $y={-2} width="12" height="21" viewBox="0 0 12 21" fill="none">
          <path d="M1 .5h10L7 6.500l4 5.500v2H1v-2l4-5.500z" fill="#fff" stroke="#777" />
          <rect x="1.500" y="14.500" width="9" height="5.500" fill="#fff" stroke="#777" />
        </Marker>
        <Marker $x={678} $y={3} width="11" height="9" viewBox="0 0 11 9" fill="none">
          <path d="M.5 8.500V4l5-3.500 5 3.500v4.500z" fill="#fff" stroke="#888" />
        </Marker>
      </HRuler>
      <ScrollBar>
        <ScrollBtn><Tri up /></ScrollBtn>
        <Thumb />
        <ScrollBtn $end><Tri /></ScrollBtn>
      </ScrollBar>
      <VRulerCol>
        <VRuler>
          {VRULER_KS.map((k) => (
            <VCell key={k}><VMark k={k} /></VCell>
          ))}
        </VRuler>
      </VRulerCol>
      <Pages>
        <PageTail />
        <Page>
          <CaseGrid>
            <CostExpr>
              <BigFrac top="qi" bottom="Cpb" />∗&nbsp;<Mi>Cb</Mi>&nbsp;+ 2 ∗&nbsp;<Mi>Cm</Mi>
            </CostExpr>
            <CondCell>
              <MathLine><Mi>Cpm</Mi>&nbsp;&lt;&nbsp;<Mi>Mod</Mi>(<Mi>qi</Mi>,&nbsp;<Mi>Cpb</Mi>) ≤ 2 ∗&nbsp;<Mi>Cpm</Mi></MathLine>
            </CondCell>
            <CostExpr>
              <BigFrac top="qi" bottom="Cpb" />∗&nbsp;<Mi>Cb</Mi>
            </CostExpr>
            <CondCell>
              <MathLine><Mi>Mod</Mi>(<Mi>qi</Mi>,&nbsp;<Mi>Cpb</Mi>) = 0</MathLine>
            </CondCell>
            <CostExpr>
              <BigFrac top="qi" bottom="Cpb" />∗&nbsp;<Mi>Cb</Mi>&nbsp;+&nbsp;<Mi>Cb</Mi>
            </CostExpr>
            <CondCell>
              <MathLine><Mi>Mod</Mi>(<Mi>qi</Mi>,&nbsp;<Mi>Cpb</Mi>) &gt; 2 ∗&nbsp;<Mi>Cpm</Mi></MathLine>
            </CondCell>
          </CaseGrid>
          <CaseLine>
            Trường hợp 2:
            <MathLine>0 ≤&nbsp;<Mi>qi</Mi>&nbsp;&lt;&nbsp;<Mi>Cpb</Mi></MathLine>
          </CaseLine>
          <CostTable>
            <TableRowHead>
              <HeadLeft><Mi>τc</Mi><SmallSub><Mi $fs={10}>i</Mi></SmallSub></HeadLeft>
              <HeadRight>Điều kiện</HeadRight>
            </TableRowHead>
            <MathLine><SmallFrac /><PlainPart>*</PlainPart><Mi>Cm</Mi>&nbsp;+&nbsp;<Mi>Cm</Mi></MathLine>
            <Condition>2*Cp<SmallSub>s</SmallSub> &lt; MOD( q<SmallSub>i</SmallSub>, Cpm)</Condition>
            <MathLine><SmallFrac /><PlainPart>*Cm + 2*Cs</PlainPart></MathLine>
            <Condition>Cps &lt; MOD(q<SmallSub>I</SmallSub>, Cp<SmallSub>m</SmallSub>) ≤ 2*Cp<SmallSub>s</SmallSub></Condition>
            <MathLine><SmallFrac /><PlainPart>*Cm+Cs</PlainPart></MathLine>
            <Condition>0 <TextCaret />&lt; MOD(q<SmallSub>i</SmallSub>, Cp<SmallSub>m</SmallSub>) ≤ Cp<SmallSub>s</SmallSub></Condition>
            <div>Cm</div>
            <Condition>MOD(q<SmallSub>i</SmallSub>, Cp<SmallSub>m</SmallSub>) = 0</Condition>
          </CostTable>
          <MoveHandle>
            <Ic w={8} h={8}><path d="M4 0v8M0 4h8M2.800 1.200 4 0l1.200 1.200M2.800 6.800 4 8l1.200-1.200M1.200 2.800 0 4l1.200 1.200M6.800 2.800 8 4 6.800 5.200" stroke="#444" strokeWidth=".8" /></Ic>
          </MoveHandle>
          <SizeHandle />
          <Accents>
            <AccentMark $ml={174}>ề</AccentMark>
            <AccentMark $ml={175}>ế</AccentMark>
            <AccentMark $ml={108}>ế</AccentMark>
          </Accents>
        </Page>
      </Pages>
    </Workspace>

    <StatusBar>
      <StatusItem $ml={7}>Page 4 of 6</StatusItem>
      <StatusItem $ml={19}>1797 words</StatusItem>
      <StatusItem $ml={19}>English (United States)</StatusItem>
      <StatusSpacer />
      <ViewBtn $w={38}><ReadIcon /></ViewBtn>
      <ViewBtn $w={38} $on><PrintIcon /></ViewBtn>
      <ViewBtn $w={38} $mr={2}><WebIcon /></ViewBtn>
      <ZoomSign><Ic w={5} h={2}><rect width="5" height="2" fill="#666" /></Ic></ZoomSign>
      <ZoomTrack><ZoomThumb /></ZoomTrack>
      <ZoomSign><Ic w={9} h={9}><path d="M3.500 0h2v3.500H9v2H5.500V9h-2V5.500H0v-2h3.500z" fill="#666" /></Ic></ZoomSign>
      <StatusItem $ml={13} $mr={9}>100%</StatusItem>
    </StatusBar>

    <Taskbar>
      <TaskSlot><WinLogo /></TaskSlot>
      <TaskSlot><CortanaIcon /></TaskSlot>
      <TaskSlot><TaskViewIcon /></TaskSlot>
      <TaskSlot $ml={3}><EdgeIcon /></TaskSlot>
      <TaskSlot $ml={1}><FolderIcon /></TaskSlot>
      <TaskSlot><StoreIcon /></TaskSlot>
      <TaskSlot $ml={2} $bg="#3b464c" $bar="#76b9ed"><WordIcon /></TaskSlot>
      <TaskSlot $ml={5} $w={40} $bar="#76b9ed"><ZaloIcon /></TaskSlot>
      <TaskSlot $ml={5} $bg="#a05a22" $bar="#f57c00"><PhotosIcon /></TaskSlot>
      <Tray>
        <TrayIcon $w={28}><TrayChevron /></TrayIcon>
        <TrayIcon $w={20}><PlugIcon /></TrayIcon>
        <TrayIcon $w={30}><WifiIcon /></TrayIcon>
        <TrayIcon $w={18}><VolumeIcon /></TrayIcon>
        <TrayText>ENG</TrayText>
        <Clock>
          <span>10:05 PM</span>
          <span>1/25/2022</span>
        </Clock>
      </Tray>
    </Taskbar>
  </Shell>
);

export default App;
